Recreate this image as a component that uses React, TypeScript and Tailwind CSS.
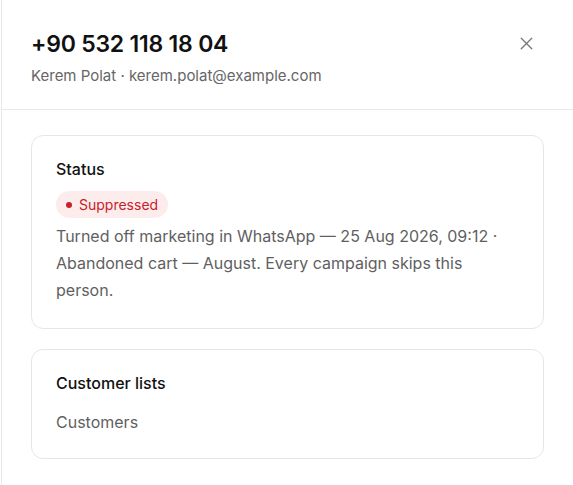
import React from "react";
import { X } from "lucide-react";

export default function App() {
  return (
    <div
      className="h-[485px] w-[573px] overflow-hidden bg-white text-[#111]"
      style={{ fontFamily: "Inter, 'Noto Sans', sans-serif" }}
    >
      <div className="ml-px flex h-full flex-col border-l border-[#e8e8e8]">
        {/* Header */}
        <div className="flex items-start justify-between border-b border-[#e8e8e8] px-[29px] pt-[30px] pb-[23px]">
          <div>
            <h1 className="text-[23px] leading-[28px] font-semibold tracking-[-0.01em]">
              +90 532 118 18 04
            </h1>
            <p className="mt-[8px] text-[15px] leading-[20px] text-[#666]">
              Kerem Polat · kerem.polat@example.com
            </p>
          </div>
          <button className="mt-[3px] mr-[7px] text-[#777]">
            <X size={21} strokeWidth={1.6} />
          </button>
        </div>

        {/* Body */}
        <div className="flex flex-col gap-5 px-[29px] pt-[25px]">
          <div className="rounded-xl border border-[#e6e6e6] px-6 pt-6 pb-[24px]">
            <h2 className="text-[16px] leading-[18px] font-medium">Status</h2>
            <span className="mt-[13px] inline-flex h-[27px] items-center gap-[7px] rounded-full bg-[#fdecec] px-[10px] text-[14px] text-[#c8202a]">
              <span className="h-[6px] w-[6px] rounded-full bg-[#c8202a]" />
              Suppressed
            </span>
            <p className="mt-[5px] text-[16px] leading-[27px] text-[#5f5f5f]">
              Turned off marketing in WhatsApp — 25 Aug 2026, 09:12 · Abandoned cart — August. Every campaign skips this person.
            </p>
          </div>

          <div className="rounded-xl border border-[#e6e6e6] px-6 pt-6 pb-[22px]">
            <h2 className="text-[16px] leading-[18px] font-medium">Customer lists</h2>
            <p className="mt-[17px] text-[16px] leading-[27px] text-[#5f5f5f]">Customers</p>
          </div>
        </div>
      </div>
    </div>
  );
}
